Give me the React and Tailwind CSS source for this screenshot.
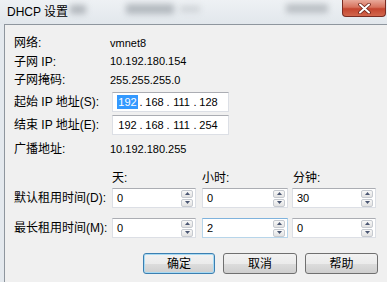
import React from 'react';

const btnGray =
  'bg-[linear-gradient(#f2f2f2,#ebebeb_50%,#dddddd_50%,#cfcfcf)] border border-[#707070]';

function Arrow({ up }) {
  return (
    <svg width="5" height="3" viewBox="0 0 5 3">
      <path d={up ? 'M0 3L2.5 0L5 3z' : 'M0 0L2.5 3L5 0z'} fill="#4a5672" />
    </svg>
  );
}

function SpinBox({ value, width = 'w-[84px]', hover = false, className = '' }) {
  return (
    <div
      className={`${width} ${className} h-[20px] flex items-center bg-white border ${
        hover ? 'border-[#b7d5ea] border-t-[#7fb2dc]' : 'border-[#dcdfe5] border-t-[#abadb3]'
      }`}
    >
      <span className="flex-1 pl-[4px] text-[11px] leading-none">{value}</span>
      <div className="flex flex-col gap-[1px] mr-[2px]">
        <div className="w-[12px] h-[8px] rounded-[2px] border border-[#c6cad0] bg-linear-to-b from-[#f8f8f8] to-[#e2e2e2] flex items-center justify-center">
          <Arrow up />
        </div>
        <div className="w-[12px] h-[8px] rounded-[2px] border border-[#c6cad0] bg-linear-to-b from-[#f8f8f8] to-[#e2e2e2] flex items-center justify-center">
          <Arrow />
        </div>
      </div>
    </div>
  );
}

function IpBox({ octets, selectFirst }) {
  return (
    <div className="w-[117px] h-[20px] ml-[2px] flex items-center bg-white border border-[#dcdfe5] border-t-[#abadb3] pl-[4px] text-[11px]">
      {octets.map((o, i) => (
        <React.Fragment key={i}>
          {i > 0 && <span className="w-[6px] text-center">.</span>}
          <span className="w-[21px] text-center">
            {selectFirst && i === 0 ? (
              <span className="inline-block bg-[#3399ff] text-white px-[1px] leading-[14px]">{o}</span>
            ) : (
              o
            )}
          </span>
        </React.Fragment>
      ))}
    </div>
  );
}

function InfoRow({ label, value, h }) {
  return (
    <div className={`flex items-center ${h}`}>
      <span className="w-[96px]">{label}</span>
      <span className="text-[11px]">{value}</span>
    </div>
  );
}

export default function App() {
  return (
    <div className="w-[387px] h-[282px] overflow-hidden flex flex-col bg-[#e4e9ee] text-[12px] text-black font-['Liberation_Sans','Noto_Sans_CJK_SC',sans-serif]">
      {/* Title bar */}
      <div className="relative h-[24px] flex items-start bg-linear-to-b from-[#eef1f4] to-[#e2e7ec]">
        <span className="absolute left-[70px] top-[5px] w-[16px] h-[9px] bg-[#9aa0a6] blur-[3px] opacity-70" />
        <span className="absolute left-[126px] top-[4px] w-[48px] h-[10px] bg-[#8f969d] blur-[3px] opacity-60" />
        <span className="absolute left-[180px] top-[6px] w-[20px] h-[6px] bg-[#b0b5ba] blur-[3px] opacity-50" />
        <span className="absolute left-[286px] top-[4px] w-[42px] h-[9px] bg-[#9aa0a6] blur-[3px] opacity-60" />
        <span className="relative pl-[7px] pt-[5px] leading-[14px]">DHCP 设置</span>
        <div className="ml-auto mr-[1px] w-[44px] h-[17px] rounded-b-[4px] border border-t-0 border-[#7a2c22] bg-[linear-gradient(#e9a99a,#d7725d_45%,#c4452f_55%,#d2674d)] flex items-center justify-center">
          <svg width="13" height="11" viewBox="0 0 13 11">
            <path d="M2 1.5L11 9.5M11 1.5L2 9.5" stroke="#6b2318" strokeWidth="3.6" strokeLinecap="round" />
            <path d="M2 1.5L11 9.5M11 1.5L2 9.5" stroke="#ffffff" strokeWidth="2" strokeLinecap="round" />
          </svg>
        </div>
      </div>

      {/* Client area */}
      <div className="flex-1 ml-[4px] border-l border-t border-[#8e969e] bg-[#f0f0f0] flex flex-col pl-[9px]">
        <div className="mt-[9px]" />
        <InfoRow label="网络:" value="vmnet8" h="h-[18px]" />
        <InfoRow label="子网 IP:" value="10.192.180.154" h="h-[19px]" />
        <InfoRow label="子网掩码:" value="255.255.255.0" h="h-[18px]" />

        <div className="mt-[3px] h-[20px] flex items-center">
          <span className="w-[96px]">起始 IP 地址(S):</span>
          <IpBox octets={['192', '168', '111', '128']} selectFirst />
        </div>
        <div className="mt-[3px] h-[20px] flex items-center">
          <span className="w-[96px]">结束 IP 地址(E):</span>
          <IpBox octets={['192', '168', '111', '254']} />
        </div>

        <div className="mt-[5px]" />
        <InfoRow label="广播地址:" value="10.192.180.255" h="h-[18px]" />

        {/* Lease headers */}
        <div className="mt-[11px] h-[18px] flex items-center">
          <span className="w-[98px]" />
          <span className="w-[90px]">天:</span>
          <span className="w-[91px]">小时:</span>
          <span>分钟:</span>
        </div>
        <div className="mt-[1px] flex items-center">
          <span className="w-[98px]">默认租用时间(D):</span>
          <SpinBox value="0" width="w-[84px]" />
          <SpinBox value="0" width="w-[86px]" className="ml-[6px]" />
          <SpinBox value="30" width="w-[84px]" className="ml-[4px]" />
        </div>
        <div className="mt-[10px] flex items-center">
          <span className="w-[98px]">最长租用时间(M):</span>
          <SpinBox value="0" width="w-[84px]" />
          <SpinBox value="2" width="w-[86px]" className="ml-[6px]" hover />
          <SpinBox value="0" width="w-[84px]" className="ml-[4px]" />
        </div>

        {/* Buttons */}
        <div className="mt-[15px] flex items-center gap-[8px] pl-[129px]">
          <button className="w-[72px] h-[21px] rounded-[3px] border border-[#3c7fb1] shadow-[inset_0_0_0_1px_#a8daf3] bg-[linear-gradient(#f2f2f2,#ebebeb_50%,#dddddd_50%,#cfcfcf)]">
            确定
          </button>
          <button className={`w-[74px] h-[21px] rounded-[3px] ${btnGray}`}>取消</button>
          <button className={`w-[73px] h-[21px] rounded-[3px] ${btnGray}`}>帮助</button>
        </div>
      </div>
    </div>
  );
}
